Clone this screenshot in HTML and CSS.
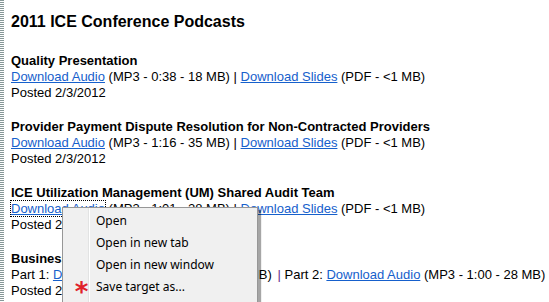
FILE: index.html
```html
<!doctype html>
<html>
<head>
<meta charset="utf-8">
<title>2011 ICE Conference Podcasts</title>
<link rel="stylesheet" href="styles.css">
</head>

<body>
    <div class="page">
        <div class="stripe"></div>
        <div class="content">
            <h1>2011 ICE Conference Podcasts</h1>
            <div class="item">
                <b>Quality Presentation</b><br>
                <a href="#">Download Audio</a> (MP3 - 0:38 - 18 MB) | <a href="#">Download Slides</a> (PDF - &lt;1 MB)<br>
                Posted 2/3/2012
            </div>
            <div class="item">
                <b>Provider Payment Dispute Resolution for Non-Contracted Providers</b><br>
                <a href="#">Download Audio</a> (MP3 - 1:16 - 35 MB) | <a href="#">Download Slides</a> (PDF - &lt;1 MB)<br>
                Posted 2/3/2012
            </div>
            <div class="item">
                <b>ICE Utilization Management (UM) Shared Audit Team</b><br>
                <a href="#" class="focus">Download Audio</a> (MP3 - 1:01 - 28 MB) | <a href="#">Download Slides</a> (PDF - &lt;1 MB)<br>
                Posted 2/3/2012
            </div>
            <div class="item">
                <b>Business</b><br>
                Part 1: <a href="#">Download Audio</a> (MP3 - 0:57 - 27 MB) <span class="sep">|</span> Part 2: <a href="#">Download Audio</a> (MP3 - 1:00 - 28 MB)<br>
                Posted 2
            </div>
        </div>
    </div>

    <div class="menu">
        <div class="menu-item"><span class="icon"></span>Open</div>
        <div class="menu-item"><span class="icon"></span>Open in new tab</div>
        <div class="menu-item"><span class="icon"></span>Open in new window</div>
        <div class="menu-item"><span class="icon star">*</span>Save target as...</div>
    </div>
</body>
</html>
```

FILE: styles.css
```css
*{
    padding: 0px;
    margin: 0px;
    box-sizing: border-box;
}
body{
    font-family: "Liberation Sans", Arial, sans-serif;
    font-size: 13px;
    line-height: 16px;
    color: black;
    background-color: white;
    overflow: hidden;
}
.page{
    display: flex;
    height: 302px;
    overflow: hidden;
}
.stripe{
    width: 4px;
    flex-shrink: 0;
    background-image: repeating-linear-gradient(#879898 0px, #879898 1px, #ffffff 1px, #ffffff 2px);
}
.content{
    padding-left: 7px;
    padding-top: 12px;
}
.content h1{
    font-size: 16px;
    line-height: 20px;
    font-weight: bold;
    margin-bottom: 21px;
}
.item{
    margin-bottom: 18px;
    white-space: nowrap;
}
.item a{
    color: #1660cc;
    text-decoration: underline;
}
.item a.focus{
    outline: 1px dotted black;
}
.sep{
    color: #6a2a8a;
    margin-left: 2px;
}
.menu{
    position: absolute;
    left: 62px;
    top: 207px;
    width: 196px;
    height: 95px;
    background-color: #f0f0f0;
    border: 1px solid #979797;
    border-bottom: none;
    box-shadow: 3px 3px 1px rgba(0,0,0,0.35);
    padding: 2px;
    font-family: "Noto Sans", "Open Sans", sans-serif;
    font-size: 12px;
    color: black;
    background-image: linear-gradient(to right, transparent 25px, #e2e3e3 25px, #e2e3e3 26px, #ffffff 26px, #ffffff 27px, transparent 27px);
}
.menu-item{
    height: 22px;
    line-height: 22px;
    display: flex;
    align-items: center;
}
.icon{
    width: 31px;
    flex-shrink: 0;
    text-align: center;
}
.star{
    color: #e0222a;
    font-family: "DejaVu Sans", sans-serif;
    font-size: 26px;
    font-weight: bold;
    line-height: 22px;
    padding-top: 10px;
    padding-left: 2px;
}
```
